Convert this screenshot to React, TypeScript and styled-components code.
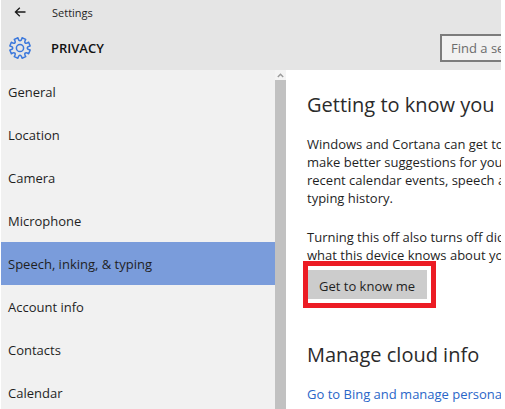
import React from 'react';
import styled, { createGlobalStyle } from 'styled-components';

const GlobalStyle = createGlobalStyle`
  * {
    box-sizing: border-box;
  }

  body {
    margin: 0;
    background: #fff;
    color: #1f1f1f;
    font-family: 'Open Sans', 'Noto Sans', sans-serif;
    font-size: 13px;
  }
`;

const Window = styled.div`
  display: flex;
  flex-direction: column;
  height: 100vh;
  padding: 0 4px 0 1px;
  overflow: hidden;
`;

const Header = styled.header`
  flex: none;
  height: 70px;
  background: #e5e5e5;
`;

const TitleBar = styled.div`
  display: flex;
  align-items: center;
  gap: 26px;
  height: 24px;
  padding-left: 13px;
  font-size: 11px;
`;

const BackButton = styled.button`
  display: flex;
  padding: 0;
  border: 0;
  background: none;
  color: #1a1a1a;
`;

const PageBar = styled.div`
  display: flex;
  align-items: center;
  height: 48px;
  padding-left: 6px;
`;

const PageTitle = styled.h1`
  margin: 0 0 0 18px;
  font-size: 13px;
  font-weight: 600;
  color: #111;
`;

const SearchBox = styled.input`
  width: 61px;
  height: 28px;
  margin-left: auto;
  padding: 0 0 0 9px;
  border: 2px solid #7c7c7c;
  border-right: 0;
  border-radius: 0;
  background: #f1f1f1;
  font: inherit;

  &::placeholder {
    color: #6c6c6c;
    opacity: 1;
  }
`;

const Body = styled.div`
  display: flex;
  flex: 1;
  min-height: 0;
`;

const Nav = styled.nav`
  flex: 0 0 274px;
  background: #f1f1f1;
  overflow: hidden;
`;

const NavItem = styled.a<{ $active?: boolean }>`
  display: flex;
  align-items: center;
  height: 43px;
  padding: 0 8px 0 7px;
  background: ${({ $active }) => ($active ? '#7a9cdb' : 'transparent')};
  color: inherit;
  text-decoration: none;
`;

const ScrollTrack = styled.div`
  display: flex;
  flex: 0 0 11px;
  flex-direction: column;
  background: #f4f4f4;
`;

const ScrollUp = styled.div`
  display: flex;
  align-items: center;
  justify-content: center;
  height: 10px;
  color: #9a9a9a;
`;

const ScrollThumb = styled.div`
  flex: 1;
  background: #c1c1c1;
`;

const Content = styled.main`
  flex: 1;
  min-width: 0;
  padding: 20px 0 0 21px;
  overflow: hidden;
  white-space: nowrap;
`;

const Heading = styled.h2`
  margin: 0 0 15px;
  font-size: 20px;
  font-weight: 400;
  line-height: 30px;
  color: #2b2b2b;
`;

const Paragraph = styled.p`
  margin: 0 0 21px;
  line-height: 18px;
`;

const ActionParagraph = styled(Paragraph)`
  margin-bottom: 6px;
`;

const Highlight = styled.div`
  position: relative;
  width: fit-content;
  margin-bottom: 41px;

  &::after {
    content: '';
    position: absolute;
    inset: -9px -9px -9px -4px;
    border: 5px solid #ec1c24;
    pointer-events: none;
  }
`;

const ActionButton = styled.button`
  display: block;
  height: 29px;
  padding: 2px 12px 0;
  border: 0;
  background: #cccccc;
  color: inherit;
  font: inherit;
`;

const TextLink = styled.a`
  color: #2a66c8;
  line-height: 18px;
  text-decoration: none;
`;

const BackIcon = () => (
  <svg width="12" height="12" viewBox="0 0 12 12" fill="none" stroke="currentColor" strokeWidth="1.3">
    <path d="M11.5 6H1.5M5.8 1.7L1.4 6l4.4 4.3" />
  </svg>
);

const GEAR_TEETH = 8;

// Eight flat teeth with scooped valleys between them
const gearPath = () => {
  const point = (radius: number, degrees: number) => {
    const a = (degrees * Math.PI) / 180;
    return `${(13 + radius * Math.cos(a)).toFixed(2)} ${(13 + radius * Math.sin(a)).toFixed(2)}`;
  };
  let d = '';
  for (let i = 0; i < GEAR_TEETH; i++) {
    const c = (i * 360) / GEAR_TEETH - 67.5;
    d += `${i === 0 ? 'M' : 'L'}${point(10.4, c - 11)}L${point(10.4, c + 11)}`;
    d += `C${point(6.4, c + 12)} ${point(6.4, c + 33)} ${point(10.4, c + 34)}`;
  }
  return `${d}Z`;
};

const GearIcon = () => (
  <svg width="26" height="26" viewBox="0 0 26 26" fill="none" stroke="#3b78dc" strokeWidth="1.5" strokeLinejoin="round">
    <path d={gearPath()} />
    <circle cx="13" cy="13" r="3.6" />
  </svg>
);

const ChevronUp = () => (
  <svg width="7" height="5" viewBox="0 0 7 5" fill="none" stroke="currentColor" strokeWidth="1.4">
    <path d="M0.8 4L3.5 1.3L6.2 4" />
  </svg>
);

const sections = [
  'General',
  'Location',
  'Camera',
  'Microphone',
  'Speech, inking, & typing',
  'Account info',
  'Contacts',
  'Calendar',
];

export default function App() {
  const active = 'Speech, inking, & typing';

  return (
    <>
      <GlobalStyle />
      <Window>
        <Header>
          <TitleBar>
            <BackButton type="button" aria-label="Back">
              <BackIcon />
            </BackButton>
            <span>Settings</span>
          </TitleBar>
          <PageBar>
            <GearIcon />
            <PageTitle>PRIVACY</PageTitle>
            <SearchBox type="text" placeholder="Find a setting" aria-label="Find a setting" />
          </PageBar>
        </Header>
        <Body>
          <Nav>
            {sections.map((name) => (
              <NavItem key={name} href="#" $active={name === active}>
                {name}
              </NavItem>
            ))}
          </Nav>
          <ScrollTrack>
            <ScrollUp>
              <ChevronUp />
            </ScrollUp>
            <ScrollThumb />
          </ScrollTrack>
          <Content>
            <Heading>Getting to know you</Heading>
            <Paragraph>
              Windows and Cortana can get to
              <br />
              make better suggestions for you.
              <br />
              recent calendar events, speech an
              <br />
              typing history.
            </Paragraph>
            <ActionParagraph>
              Turning this off also turns off dict
              <br />
              what this device knows about yo
            </ActionParagraph>
            <Highlight>
              <ActionButton type="button">Get to know me</ActionButton>
            </Highlight>
            <Heading>Manage cloud info</Heading>
            <TextLink href="#">Go to Bing and manage personal</TextLink>
          </Content>
        </Body>
      </Window>
    </>
  );
}
